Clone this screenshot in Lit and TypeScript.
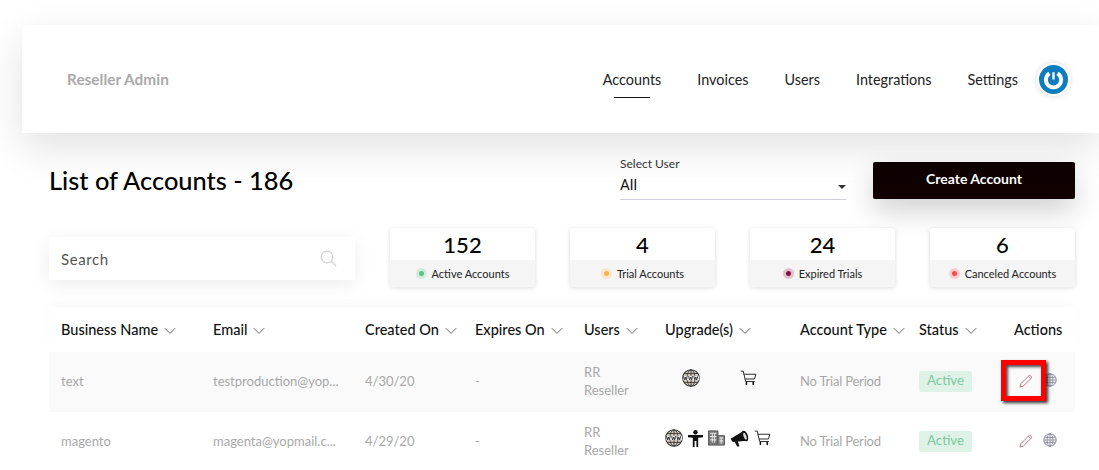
import { html, css, LitElement, svg } from 'lit';
import { customElement } from 'lit/decorators.js';

const chevron = html`<svg class="chev" viewBox="0 0 12 8"><path d="M.8 1.2l5.2 5.2 5.2-5.2" fill="none" stroke="#666" stroke-width="1"/></svg>`;

const globeWww = html`<svg class="up" width="18" height="18" viewBox="0 0 19 19">
  <circle cx="9.5" cy="9.5" r="8.7" fill="#cfc8bd" stroke="#333" stroke-width="1.2"/>
  <ellipse cx="9.5" cy="9.5" rx="4.2" ry="8.6" fill="none" stroke="#333" stroke-width=".9"/>
  <path d="M9.5 1v17M2 4.8h15M2 14.2h15" stroke="#333" stroke-width=".9"/>
  <path d="M1 7.2h17v4.6H1z" fill="#eee"/>
  <path d="M1.5 7.5l1 4 1-3 1 3 1-4M7 7.5l1 4 1.2-3 1 3 1-4M12.5 7.5l1 4 1-3 1 3 1.2-4" fill="none" stroke="#222" stroke-width=".9"/>
</svg>`;

const cart = html`<svg class="up" width="17" height="17" viewBox="0 0 18 18">
  <path d="M.8 1.2h2.6l2.6 11h9.6M4 4.5h12.8l-1.4 5H5.2" fill="none" stroke="#222" stroke-width="1"/>
  <path d="M6.8 12.5v3.4M14 12.5v3.4" stroke="#111" stroke-width="1.6"/>
</svg>`;

const person = html`<svg class="up" width="15" height="17" viewBox="0 0 15 17">
  <circle cx="7.5" cy="2.2" r="2.2" fill="#111"/>
  <path d="M0 5h15v2.2l-4.8.5V17H8.4v-6H6.6v6H4.8V7.7L0 7.2z" fill="#111"/>
</svg>`;

const buildings = html`<svg class="up" width="17" height="16" viewBox="0 0 18 16">
  <path d="M0.5 0.5h10v15h-10z" fill="#777" stroke="#555"/>
  <path d="M10.5 5.5h7v10h-7z" fill="#8a8a8a" stroke="#555"/>
  <path d="M2 3h7M2 6.5h7M2 10h7M4.5 3v10M7 3v10M12 8h4M12 11h4M14 7v7" stroke="#eee" stroke-width="1"/>
</svg>`;

const megaphone = html`<svg class="up" width="19" height="17" viewBox="0 0 19 17">
  <path d="M.6 8.8L13 1.2l3.8 9.6L2.6 12z" fill="#111"/>
  <ellipse cx="15" cy="6" rx="2.8" ry="5.6" transform="rotate(-20 15 6)" fill="#111"/>
  <ellipse cx="15" cy="6.2" rx="1.3" ry="3.6" transform="rotate(-20 15 6.2)" fill="#ddd"/>
  <path d="M4.6 11.8l2.6 4.8h2.2L7.8 11z" fill="#111"/>
</svg>`;

const pencil = html`<svg width="14" height="14" viewBox="0 0 14 14">
  <path d="M1 13l.8-3.2L10.6 1l2.4 2.4-8.8 8.8z" fill="none" stroke="#b56a70" stroke-width=".9"/>
  <path d="M9.4 2.2l2.4 2.4" stroke="#8f8fa0" stroke-width=".8"/>
</svg>`;

const globeLine = svg`<circle cx="7" cy="7" r="6.2" fill="none" stroke="#7d7f95" stroke-width=".9"/>
  <ellipse cx="7" cy="7" rx="2.9" ry="6.2" fill="none" stroke="#7d7f95" stroke-width=".8"/>
  <path d="M7 .8v12.4M1.4 4.4h11.2M.8 7h12.4M1.4 9.6h11.2" stroke="#7d7f95" stroke-width=".8"/>`;

const columns = [
  'Business Name', 'Email', 'Created On', 'Expires On', 'Users', 'Upgrade(s)', 'Account Type', 'Status',
];

const cards = [
  { n: '152', label: 'Active Accounts', color: '#5fc08c', halo: '#d3ecdd' },
  { n: '4', label: 'Trial Accounts', color: '#f9b24a', halo: '#f9e8cd' },
  { n: '24', label: 'Expired Trials', color: '#8b0d3c', halo: '#e0c2ce' },
  { n: '6', label: 'Canceled Accounts', color: '#fb4a4f', halo: '#fbd0d1' },
];

const rows = [
  { name: 'text', email: 'testproduction@yop...', created: '4/30/20', ups: [globeWww, cart], spread: true, boxed: true },
  { name: 'magento', email: 'magenta@yopmail.c...', created: '4/29/20', ups: [globeWww, person, buildings, megaphone, cart], spread: false, boxed: false },
];

@customElement('app-root')
export class AppRoot extends LitElement {
  static styles = css`
    :host {
      display: block;
      height: 100vh;
      overflow: hidden;
      background: #fff;
      font-family: Lato, "Liberation Sans", sans-serif;
      color: #111;
    }
    .top {
      display: flex;
      align-items: center;
      height: 108px;
      margin: 25px 0 0 22px;
      padding: 0 29px 0 45px;
      background: #fff;
      box-shadow: 0 14px 40px rgba(0, 0, 0, 0.12);
      position: relative;
    }
    .brand {
      font-size: 15.4px;
      font-weight: 700;
      color: #aaa;
      margin-right: auto;
    }
    nav {
      display: flex;
      gap: 36px;
      font-size: 14.4px;
      color: #222;
    }
    nav a {
      position: relative;
    }
    nav a.on::after {
      content: '';
      position: absolute;
      left: 11px;
      right: 11px;
      bottom: -10px;
      border-bottom: 1px solid #111;
    }
    .power {
      width: 29px;
      height: 29px;
      margin-left: 19px;
      border: 2px solid #fff;
      border-radius: 50%;
      box-shadow: 0 0 6px rgba(0, 0, 0, 0.15);
    }
    .power svg {
      display: block;
    }
    .head {
      display: flex;
      align-items: flex-start;
      padding: 29px 24px 0 49px;
      height: 66px;
      box-sizing: content-box;
    }
    h1 {
      margin: 3px 0 0;
      width: 571px;
      font-size: 25.4px;
      line-height: 30px;
      font-weight: 500;
      color: #000;
    }
    .select {
      width: 226px;
      height: 42px;
      margin-top: -5px;
      border-bottom: 1px solid #cfd0dc;
      position: relative;
    }
    .select small {
      display: block;
      font-size: 12px;
      line-height: 14px;
      color: #333;
    }
    .select span {
      display: block;
      font-family: Roboto, sans-serif;
      font-size: 15px;
      line-height: 20px;
      margin-top: 4px;
    }
    .select i {
      position: absolute;
      right: 0;
      bottom: 10px;
      border: 4.5px solid transparent;
      border-top: 4.5px solid #333;
      border-bottom: 0;
    }
    .btn {
      width: 202px;
      height: 37px;
      margin-left: 27px;
      padding-bottom: 5px;
      box-sizing: border-box;
      background: #100000;
      border-radius: 2px;
      color: #fff;
      font-size: 14px;
      font-weight: 700;
      display: flex;
      align-items: center;
      justify-content: center;
      box-shadow: 0 12px 28px rgba(0, 0, 0, 0.18);
    }
    .filters {
      display: flex;
      align-items: flex-start;
      padding-left: 49px;
      height: 79px;
    }
    .search {
      width: 306px;
      height: 43px;
      margin: 9px 35px 0 0;
      padding: 0 18px 0 12px;
      box-sizing: border-box;
      display: flex;
      align-items: center;
      justify-content: space-between;
      background: #fff;
      box-shadow: 0 4px 18px rgba(0, 0, 0, 0.08);
      font-size: 15px;
      letter-spacing: 0.6px;
      color: #555;
    }
    .cards {
      display: flex;
      gap: 35px;
    }
    .card {
      width: 145px;
      height: 59px;
      border-radius: 4px;
      overflow: hidden;
      background: #fff;
      box-shadow: 0 1px 5px rgba(0, 0, 0, 0.14);
    }
    .card b {
      display: block;
      height: 32px;
      line-height: 33px;
      text-align: center;
      font-size: 22px;
      font-weight: 500;
      color: #000;
    }
    .card div {
      height: 27px;
      display: flex;
      align-items: center;
      justify-content: center;
      gap: 5px;
      background: #f5f5f5;
      font-size: 11px;
      color: #222;
    }
    .dot {
      width: 5px;
      height: 5px;
      border-radius: 50%;
      border: 3px solid;
    }
    .table {
      margin: 0 24px 0 49px;
    }
    .tr {
      display: grid;
      grid-template-columns: 152px 152px 110px 109px 81px 135px 119px 95px 1fr;
      align-items: center;
      padding-left: 12px;
    }
    .th {
      height: 45px;
      font-size: 14.5px;
      font-weight: 500;
      color: #111;
      background: #fff;
      box-shadow: 0 -6px 12px rgba(0, 0, 0, 0.02);
    }
    .chev {
      width: 12px;
      height: 8px;
      margin-left: 6px;
    }
    .row {
      height: 60px;
      padding-bottom: 2px;
      box-sizing: border-box;
      font-size: 13px;
      color: #a8a8a8;
    }
    .row.odd {
      background: #fafafa;
    }
    .email {
      white-space: nowrap;
    }
    .users {
      line-height: 18px;
    }
    .ups {
      display: flex;
      align-items: center;
      gap: 5px;
      width: 112px;
      margin-top: -6px;
    }
    .ups.wide {
      gap: 40px;
      padding-left: 17px;
      box-sizing: border-box;
    }
    .up {
      display: block;
    }
    .plan {
      letter-spacing: -0.2px;
    }
    .badge {
      display: inline-block;
      padding: 0 8px;
      height: 21px;
      line-height: 19px;
      font-size: 13.3px;
      color: #7cc9a0;
      background: #dff2e7;
      border-radius: 2px;
    }
    .acts {
      display: flex;
      align-items: center;
      gap: 10px;
      padding-left: 5px;
      position: relative;
    }
    .acts svg {
      display: block;
    }
    .acts .globe {
      margin-top: -2px;
    }
    .mark {
      position: absolute;
      left: -13px;
      top: -14px;
      width: 45px;
      height: 41px;
      box-sizing: border-box;
      border: 5px solid #f00;
      box-shadow: 2px 2px 3px rgba(0, 0, 0, 0.8), inset 2px 2px 3px rgba(0, 0, 0, 0.7);
    }
  `;

  render() {
    return html`
      <header class="top">
        <div class="brand">Reseller Admin</div>
        <nav>
          <a class="on">Accounts</a><a>Invoices</a><a>Users</a><a>Integrations</a><a>Settings</a>
        </nav>
        <div class="power">
          <svg width="29" height="29" viewBox="0 0 30 30">
            <circle cx="15" cy="15" r="15" fill="#0f7dbd"/>
            <path d="M10.8 8.6a7.9 7.9 0 1 0 8.4 0" fill="none" stroke="#fff" stroke-width="4"/>
            <path d="M15 7.5v7.5" stroke="#fff" stroke-width="2.4"/>
          </svg>
        </div>
      </header>

      <section class="head">
        <h1>List of Accounts - 186</h1>
        <div class="select">
          <small>Select User</small>
          <span>All</span>
          <i></i>
        </div>
        <div class="btn">Create Account</div>
      </section>

      <section class="filters">
        <div class="search">
          Search
          <svg width="17" height="17" viewBox="0 0 17 17">
            <circle cx="7" cy="7" r="5.8" fill="none" stroke="#d4d4d4" stroke-width="1.3"/>
            <path d="M11.2 11.2l5 5" stroke="#d4d4d4" stroke-width="1.3"/>
          </svg>
        </div>
        <div class="cards">
          ${cards.map(
            (c) => html`
              <div class="card">
                <b>${c.n}</b>
                <div>
                  <span class="dot" style="background:${c.color};border-color:${c.halo}"></span>
                  ${c.label}
                </div>
              </div>
            `
          )}
        </div>
      </section>

      <section class="table">
        <div class="tr th">
          ${columns.map((c) => html`<div>${c}${chevron}</div>`)}
          <div>Actions</div>
        </div>
        ${rows.map(
          (r, i) => html`
            <div class="tr row ${i === 0 ? 'odd' : ''}">
              <div>${r.name}</div>
              <div class="email">${r.email}</div>
              <div>${r.created}</div>
              <div>-</div>
              <div class="users">RR<br />Reseller</div>
              <div class="ups ${r.spread ? 'wide' : ''}">${r.ups}</div>
              <div class="plan">No Trial Period</div>
              <div><span class="badge">Active</span></div>
              <div class="acts">
                ${pencil}
                <svg class="globe" width="14" height="14" viewBox="0 0 14 14">${globeLine}</svg>
                ${r.boxed ? html`<span class="mark"></span>` : ''}
              </div>
            </div>
          `
        )}
      </section>
    `;
  }
}
